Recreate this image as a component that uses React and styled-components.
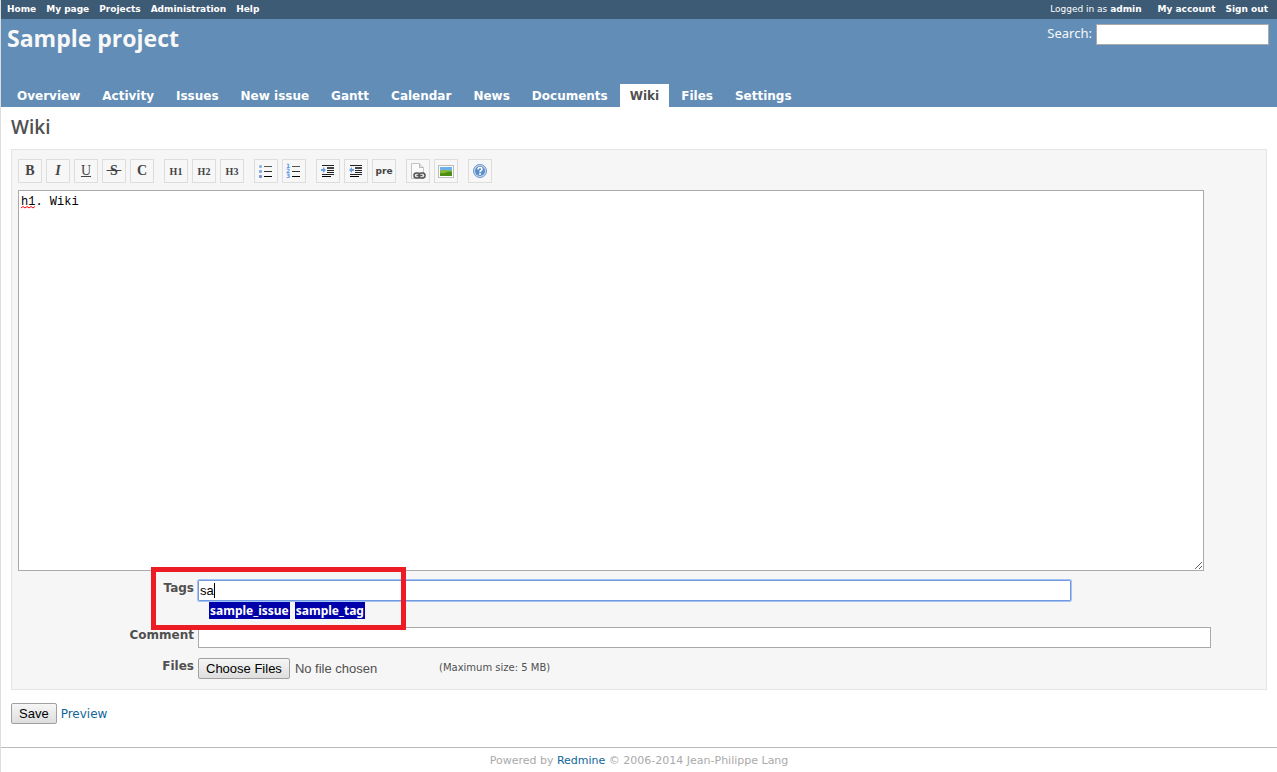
import { useState } from "react";
import styled, { createGlobalStyle } from "styled-components";

const topLinks = ["Home", "My page", "Projects", "Administration", "Help"];

const tabs = [
  "Overview",
  "Activity",
  "Issues",
  "New issue",
  "Gantt",
  "Calendar",
  "News",
  "Documents",
  "Wiki",
  "Files",
  "Settings",
];

const suggestions = ["sample_issue", "sample_tag"];

function ListIcon() {
  return (
    <svg width="16" height="16" viewBox="0 0 16 16">
      <g fill="#8fb8f0">
        <rect x="1" y="2" width="3" height="3" rx="1" />
        <rect x="1" y="7" width="3" height="3" rx="1" fill="#7fa6e8" />
        <rect x="1" y="12" width="3" height="3" rx="1" fill="#6d92de" />
      </g>
      <g fill="#333">
        <rect x="6" y="3" width="8" height="1" fill="#555" />
        <rect x="6" y="8" width="8" height="1" />
        <rect x="6" y="13" width="8" height="1" fill="#000" />
      </g>
    </svg>
  );
}

function NumberedIcon() {
  return (
    <svg width="16" height="16" viewBox="0 0 16 16">
      <g fill="#5c97ea" fontFamily="DejaVu Sans, sans-serif" fontSize="6" fontWeight="bold">
        <text x="0" y="5">1</text>
        <text x="0" y="10">2</text>
        <text x="0" y="15">3</text>
      </g>
      <g fill="#333">
        <rect x="6" y="3" width="8" height="1" fill="#555" />
        <rect x="6" y="8" width="8" height="1" />
        <rect x="6" y="13" width="8" height="1" fill="#000" />
      </g>
    </svg>
  );
}

function QuoteIcon({ flip }) {
  return (
    <svg width="16" height="16" viewBox="0 0 16 16">
      <g fill="#222">
        <rect x="2" y="2" width="12" height="1" />
        <rect x="7" y="4" width="7" height="2" fill="#444" />
        <rect x="7" y="7" width="7" height="1" />
        <rect x="7" y="9" width="7" height="1" />
        <rect x="2" y="11" width="12" height="1" />
        <rect x="2" y="13" width="9" height="1" fill="#000" />
      </g>
      <path
        fill="#6a9fe8"
        d={flip ? "M1 7 L4 4 V6 H6 V8 H4 V10 Z" : "M6 7 L3 4 V6 H1 V8 H3 V10 Z"}
      />
    </svg>
  );
}

function PageLinkIcon() {
  return (
    <svg width="16" height="16" viewBox="0 0 16 16">
      <path d="M1.5 .5 H9.5 L13.5 4.5 V15.5 H1.5 Z" fill="#fbfbfb" stroke="#c4c4c4" />
      <path d="M9.5 .5 V4.5 H13.5" fill="#e4e4e4" stroke="#bbb" />
      <g fill="#eee" stroke="#555" strokeWidth="1.5">
        <rect x="4" y="10" width="6" height="5" rx="2.5" />
        <rect x="9" y="10" width="6" height="5" rx="2.5" />
        <path d="M6.5 12.5 H12.5" />
      </g>
    </svg>
  );
}

function PictureIcon() {
  return (
    <svg width="16" height="16" viewBox="0 0 16 16">
      <rect x=".5" y="2.5" width="15" height="12" fill="#fff" stroke="#bcbcbc" />
      <rect x="2" y="4" width="12" height="9" fill="#69b1ee" />
      <path d="M2 8 Q5 6 8 7 Q11 8 14 7 V13 H2 Z" fill="#86b72c" />
      <path d="M2 10 Q6 11 9 9 Q12 8 14 9 V13 H2 Z" fill="#4c8d13" />
    </svg>
  );
}

function HelpIcon() {
  return (
    <svg width="16" height="16" viewBox="0 0 16 16">
      <circle cx="8" cy="8" r="6.5" fill="#c6d8ee" stroke="#6f97c7" />
      <circle cx="8" cy="8" r="5" fill="#5a8fcb" />
      <path
        d="M6 6.5 Q6 4.6 8 4.6 Q10 4.6 10 6.3 Q10 7.4 8.1 8.2 V9.3"
        fill="none"
        stroke="#fff"
        strokeWidth="1.5"
      />
      <rect x="7" y="10.3" width="2" height="1.5" fill="#fff" />
    </svg>
  );
}

const toolGroups = [
  [
    { name: "Strong", content: <b>B</b> },
    { name: "Italic", content: <i>I</i> },
    { name: "Underline", content: <u>U</u>, size: "thin" },
    { name: "Deleted", content: <s>&nbsp;S&nbsp;</s> },
    { name: "Inline Code", content: <b>C</b> },
  ],
  [
    { name: "Heading 1", content: "H1", size: "heading" },
    { name: "Heading 2", content: "H2", size: "heading" },
    { name: "Heading 3", content: "H3", size: "heading" },
  ],
  [
    { name: "Unordered list", content: <ListIcon /> },
    { name: "Ordered list", content: <NumberedIcon /> },
  ],
  [
    { name: "Quote", content: <QuoteIcon /> },
    { name: "Remove Quote", content: <QuoteIcon flip /> },
    { name: "Preformatted text", content: "pre", size: "pre" },
  ],
  [
    { name: "Link to a Wiki page", content: <PageLinkIcon /> },
    { name: "Image", content: <PictureIcon /> },
  ],
  [{ name: "Help", content: <HelpIcon /> }],
];

function App() {
  const [text, setText] = useState("h1. Wiki");
  const [tags, setTags] = useState("sa");

  return (
    <Page>
      <GlobalStyle />
      <TopMenu>
        <TopNav>
          {topLinks.map((link) => (
            <a href="#" key={link}>
              {link}
            </a>
          ))}
        </TopNav>
        <Account>
          <span>
            Logged in as <a href="#">admin</a>
          </span>
          <TopNav>
            <a href="#">My account</a>
            <a href="#">Sign out</a>
          </TopNav>
        </Account>
      </TopMenu>

      <Header>
        <TitleRow>
          <h1>Sample project</h1>
          <Search>
            <label htmlFor="q">Search:</label>
            <SearchInput id="q" type="text" />
          </Search>
        </TitleRow>
        <MainMenu>
          {tabs.map((tab) => (
            <Tab href="#" key={tab} $selected={tab === "Wiki"}>
              {tab}
            </Tab>
          ))}
        </MainMenu>
      </Header>

      <Content>
        <h2>Wiki</h2>
        <form onSubmit={(e) => e.preventDefault()}>
          <Box>
            <Toolbar>
              {toolGroups.map((group, i) => (
                <ToolGroup key={i}>
                  {group.map((tool) => (
                    <ToolButton
                      type="button"
                      key={tool.name}
                      title={tool.name}
                      aria-label={tool.name}
                      $size={tool.size}
                    >
                      {tool.content}
                    </ToolButton>
                  ))}
                </ToolGroup>
              ))}
            </Toolbar>
            <Editor>
              <TextArea
                aria-label="Wiki text"
                spellCheck={false}
                value={text}
                onChange={(e) => setText(e.target.value)}
              />
              {text.startsWith("h1") && (
                <Squiggle width="15" height="3" viewBox="0 0 15 3">
                  <path
                    d="M0 2 L2 .5 L4 2 L6 .5 L8 2 L10 .5 L12 2 L14 .5"
                    fill="none"
                    stroke="#f00"
                  />
                </Squiggle>
              )}
            </Editor>

            <Row $space={8}>
              <Highlight />
              <Label htmlFor="tags">Tags</Label>
              <TagField>
                <TagInput
                  id="tags"
                  type="text"
                  autoComplete="off"
                  value={tags}
                  onChange={(e) => setTags(e.target.value)}
                />
                {tags === "sa" && <Caret />}
                <Suggestions>
                  {suggestions.map((tag) => (
                    <button type="button" key={tag} onClick={() => setTags(tag)}>
                      {tag}
                    </button>
                  ))}
                </Suggestions>
              </TagField>
            </Row>
            <Row $space={10}>
              <Label htmlFor="comment">Comment</Label>
              <CommentInput id="comment" type="text" />
            </Row>
            <Row $space={0}>
              <Label htmlFor="files">Files</Label>
              <FileInput id="files" type="file" multiple />
              <small>(Maximum size: 5 MB)</small>
            </Row>
          </Box>
          <Actions>
            <SaveButton type="submit">Save</SaveButton>
            <a href="#">Preview</a>
          </Actions>
        </form>
      </Content>

      <Footer>
        Powered by <a href="#">Redmine</a> © 2006-2014 Jean-Philippe Lang
      </Footer>
    </Page>
  );
}

export default App;

const GlobalStyle = createGlobalStyle`
  * {
    box-sizing: border-box;
  }
  body {
    margin: 0;
    background-color: #fff;
    color: #505050;
    font-family: "DejaVu Sans", sans-serif;
    font-size: 12px;
  }
  a {
    color: #169;
    text-decoration: none;
  }
`;

const Page = styled.div`
  border-left: 1px solid #ddd;
`;

const TopMenu = styled.div`
  display: flex;
  justify-content: space-between;
  align-items: center;
  height: 19px;
  padding: 0 9px 2px 6px;
  background-color: #3e5b76;
  color: #fff;
  font-size: 9px;
  && a {
    color: #fff;
    font-weight: bold;
  }
`;

const TopNav = styled.nav`
  display: flex;
  gap: 10px;
`;

const Account = styled.div`
  display: flex;
  gap: 16px;
`;

const Header = styled.header`
  display: flex;
  flex-direction: column;
  justify-content: space-between;
  height: 88px;
  padding: 4px 8px 0 6px;
  background-color: #628db6;
  color: #f8f8f8;
`;

const TitleRow = styled.div`
  display: flex;
  justify-content: space-between;
  align-items: flex-start;
  h1 {
    margin: 0;
    font-family: "Open Sans", sans-serif;
    font-size: 23px;
    font-weight: bold;
    line-height: 30px;
  }
`;

const Search = styled.div`
  display: flex;
  gap: 4px;
  padding-top: 1px;
  line-height: 18px;
  font-family: "Noto Sans", sans-serif;
  font-size: 13px;
`;

const SearchInput = styled.input`
  width: 173px;
  height: 21px;
  border: 1px solid #aaa;
  background-color: #fff;
`;

const MainMenu = styled.nav`
  display: flex;
  gap: 2px;
`;

const Tab = styled.a`
  padding: 1px 10px 0;
  line-height: 22px;
  font-size: 12px;
  font-weight: bold;
  && {
    color: ${(props) => (props.$selected ? "#505050" : "#fff")};
    background-color: ${(props) => (props.$selected ? "#fff" : "transparent")};
  }
`;

const Content = styled.main`
  padding: 8px 10px 0;
  h2 {
    margin: 0 0 10px;
    font-family: "Open Sans", sans-serif;
    font-size: 19px;
    font-weight: 600;
    line-height: 24px;
  }
`;

const Box = styled.div`
  padding: 9px 6px 10px;
  border: 1px solid #e4e4e4;
  background-color: #f6f6f6;
`;

const Toolbar = styled.div`
  display: flex;
  gap: 10px;
`;

const ToolGroup = styled.div`
  display: flex;
  gap: 4px;
`;

const toolFonts = {
  thin: `14px "Liberation Serif", serif`,
  heading: `bold 10px "Liberation Serif", serif`,
  pre: `bold 9px "DejaVu Sans", sans-serif`,
};

const ToolButton = styled.button`
  display: flex;
  align-items: center;
  justify-content: center;
  width: 24px;
  height: 24px;
  padding: 0;
  border: 1px solid #ddd;
  background-color: #f7f7f7;
  color: #444;
  font: ${(props) => toolFonts[props.$size] || `bold 14px "Liberation Serif", serif`};
`;

const Editor = styled.div`
  position: relative;
  margin: 7px 56px 9px 0;
`;

const TextArea = styled.textarea`
  display: block;
  width: 100%;
  height: 381px;
  padding: 3px 2px;
  border: 1px solid #aaa;
  border-radius: 0;
  outline: none;
  background-color: #fff;
  color: #000;
  font-family: "Liberation Mono", monospace;
  font-size: 12px;
  line-height: 16px;
`;

const Squiggle = styled.svg`
  position: absolute;
  left: 3px;
  top: 16px;
`;

const Row = styled.div`
  position: relative;
  display: flex;
  align-items: flex-start;
  gap: 4px;
  min-height: 21px;
  margin-bottom: ${(props) => props.$space}px;
  small {
    font-size: 10px;
    line-height: 20px;
  }
`;

const Label = styled.label`
  width: 176px;
  text-align: right;
  font-weight: bold;
  line-height: 16px;
`;

// red frame drawn around the tags row
const Highlight = styled.div`
  position: absolute;
  z-index: 1;
  left: 133px;
  top: -13px;
  width: 255px;
  height: 63px;
  border: 5px solid #ed1c24;
  pointer-events: none;
`;

const TagField = styled.div`
  position: relative;
  flex: 1;
`;

const inputFont = `
  font-family: "Liberation Sans", sans-serif;
  font-size: 13px;
`;

const TagInput = styled.input`
  display: block;
  width: calc(100% - 189px);
  height: 21px;
  padding: 0 1px;
  border: 1px solid #6f9ae0;
  outline: 1px solid #a5c3f5;
  border-radius: 1px;
  color: #000;
  ${inputFont}
`;

const Caret = styled.span`
  position: absolute;
  left: 16px;
  top: 3px;
  width: 1px;
  height: 15px;
  background-color: #000;
`;

const Suggestions = styled.div`
  display: flex;
  gap: 5px;
  margin-top: 1px;
  padding: 0 0 0 11px;
  && button {
    padding: 0 1px;
    border: none;
    background-color: #00a;
    color: #fff;
    font-family: "Noto Sans", sans-serif;
    font-size: 12px;
    font-weight: bold;
    line-height: 17px;
  }
`;

const CommentInput = styled.input`
  flex: 1;
  height: 21px;
  margin-right: 49px;
  border: 1px solid #aaa;
  background-color: #fff;
  ${inputFont}
`;

const buttonFace = `
  height: 21px;
  padding: 0 7px;
  border: 1px solid #a0a0a0;
  border-radius: 2px;
  background: linear-gradient(#f6f6f6, #dedede);
  color: #000;
  font-family: "Liberation Sans", sans-serif;
  font-size: 13px;
`;

const FileInput = styled.input`
  width: 237px;
  height: 21px;
  ${inputFont}
  &::file-selector-button {
    ${buttonFace}
    margin-right: 5px;
  }
`;

const Actions = styled.div`
  display: flex;
  align-items: center;
  gap: 4px;
  padding-top: 13px;
`;

const SaveButton = styled.button`
  ${buttonFace}
`;

const Footer = styled.footer`
  margin-top: 23px;
  padding: 5px;
  border-top: 1px solid #bbb;
  color: #aaa;
  font-size: 11px;
  line-height: 15px;
  text-align: center;
`;
